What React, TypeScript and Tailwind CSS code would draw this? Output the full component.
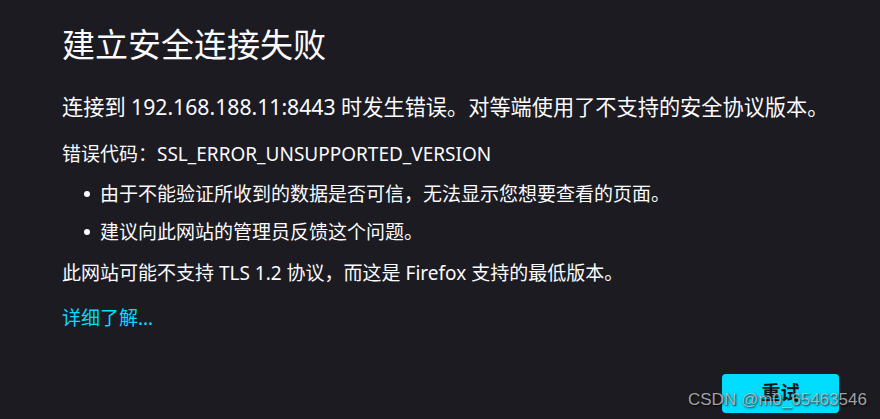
import React from 'react';

export default function App() {
  const bullets = [
    '由于不能验证所收到的数据是否可信，无法显示您想要查看的页面。',
    '建议向此网站的管理员反馈这个问题。',
  ];

  return (
    <div className="relative min-h-screen w-full overflow-hidden bg-[#1c1b22] text-[#fbfbfe] font-['Noto_Sans','Noto_Sans_CJK_SC',sans-serif]">
      <div className="flex flex-col pl-[62px] pt-[25px]">
        {/* 标题 */}
        <h1 className="text-[33px] leading-[40px] font-normal">建立安全连接失败</h1>

        <p className="mt-[28px] whitespace-nowrap text-[21.2px] leading-[28px]">
          连接到 192.168.188.11:8443 时发生错误。对等端使用了不支持的安全协议版本。
        </p>

        <p className="mt-[19px] text-[19px] leading-[28px]">
          错误代码：SSL_ERROR_UNSUPPORTED_VERSION
        </p>

        <ul className="mt-[12px] flex flex-col gap-[10px] text-[19px] leading-[28px]">
          {bullets.map((b) => (
            <li key={b} className="flex items-center">
              <span className="ml-[22px] mr-[10px] h-[6px] w-[6px] rounded-full bg-[#fbfbfe]" />
              <span>{b}</span>
            </li>
          ))}
        </ul>

        <p className="mt-[13px] text-[19px] leading-[28px]">
          此网站可能不支持 TLS 1.2 协议，而这是 Firefox 支持的最低版本。
        </p>

        <a className="mt-[17px] self-start text-[19px] leading-[28px] text-[#00ddff]" href="#">
          详细了解…
        </a>

        {/* 按钮 */}
        <div className="mt-[42px] mr-[41px] flex justify-end">
          <button className="h-[39px] w-[117px] rounded-[4px] bg-[#00ddff] text-[19px] font-semibold text-[#15141a]">
            重试
          </button>
        </div>
      </div>

      {/* 水印 */}
      <div className="absolute left-[688px] top-[389px] font-['Liberation_Sans',Arial,sans-serif] text-[17px] leading-[22px] text-[#c8c8c8]/80 [text-shadow:1px_1px_2px_rgba(0,0,0,0.8)]">
        CSDN @m0_65463546
      </div>
    </div>
  );
}
